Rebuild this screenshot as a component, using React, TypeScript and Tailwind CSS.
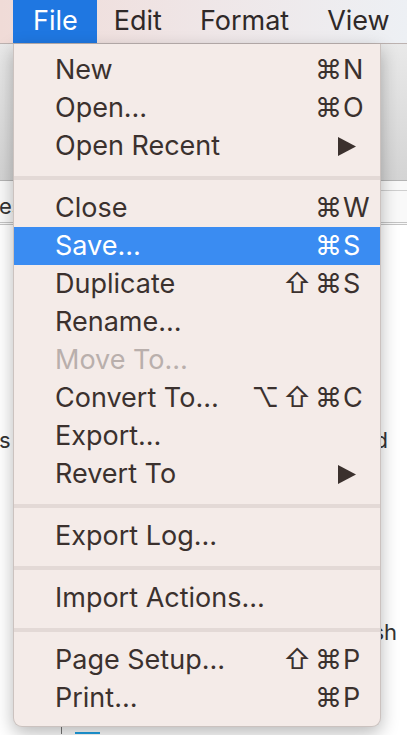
type Item =
  | { sep: true }
  | {
      sep?: false;
      label: string;
      mods?: string[];
      keyName?: string;
      submenu?: boolean;
      disabled?: boolean;
      active?: boolean;
    };

const ITEMS: Item[] = [
  { label: 'New', mods: ['⌘'], keyName: 'N' },
  { label: 'Open…', mods: ['⌘'], keyName: 'O' },
  { label: 'Open Recent', submenu: true },
  { sep: true },
  { label: 'Close', mods: ['⌘'], keyName: 'W' },
  { label: 'Save…', mods: ['⌘'], keyName: 'S', active: true },
  { label: 'Duplicate', mods: ['⇧', '⌘'], keyName: 'S' },
  { label: 'Rename…' },
  { label: 'Move To…', disabled: true },
  { label: 'Convert To…', mods: ['⌥', '⇧', '⌘'], keyName: 'C' },
  { label: 'Export…' },
  { label: 'Revert To', submenu: true },
  { sep: true },
  { label: 'Export Log…' },
  { sep: true },
  { label: 'Import Actions…' },
  { sep: true },
  { label: 'Page Setup…', mods: ['⇧', '⌘'], keyName: 'P' },
  { label: 'Print…', mods: ['⌘'], keyName: 'P' },
];

const MenuRow = ({ item }: { item: Item }) => {
  if (item.sep) {
    return (
      <div className="pt-[11px] pb-[9px]">
        <div className="h-[4px] bg-[#e3d9d6]" />
      </div>
    );
  }

  const color = item.active
    ? 'bg-[#3a8cf2] text-white'
    : item.disabled
      ? 'text-[#b9afac]'
      : 'text-[#3b312e]';

  return (
    <div className={`flex h-[38px] items-center pl-[41px] pr-[12px] ${color}`}>
      <span className="flex-1 whitespace-nowrap">{item.label}</span>
      {item.keyName && (
        <span className="flex items-center">
          {item.mods?.map((m, i) => (
            <span key={i} className="ml-[4px]">{m}</span>
          ))}
          <span className="w-[26px] pl-[1px]">{item.keyName}</span>
        </span>
      )}
      {item.submenu && (
        <svg width="18" height="19" viewBox="0 0 18 19" className="mr-[12px]">
          <polygon points="0,0 18,9.5 0,19" fill="#3b312e" />
        </svg>
      )}
    </div>
  );
};

export default function App() {
  return (
    <div
      className="relative h-[735px] w-[407px] overflow-hidden bg-white"
      style={{ fontFamily: 'Inter, "Noto Sans", "DejaVu Sans", sans-serif' }}
    >
      {/* menu bar */}
      <div className="flex h-[44px] items-stretch border-b border-[#bcb2b0] bg-gradient-to-r from-[#f0dbd7] via-[#efe6e7] to-[#edf0f4] pl-[13px] text-[27px] text-[#2f2928]">
        <div className="flex items-center bg-[#1f77e1] pl-[20px] pr-[19px] text-white">File</div>
        <div className="flex items-center pl-[17px] pr-[19px]">Edit</div>
        <div className="flex items-center px-[19px]">Format</div>
        <div className="flex items-center px-[19px]">View</div>
      </div>

      {/* window behind the menu */}
      <div className="h-[136px] bg-gradient-to-b from-[#e9e9e9] to-[#d4d4d4]" />
      <div className="border-t border-[#b4b4b4]">
        <div className="flex h-[44px] items-end justify-between border-b-[3px] border-double border-[#c4c4c4] bg-[#f9f9f9] pb-[5px] text-[22px] leading-none text-[#333]">
          <span className="-ml-[1px]">es</span>
          <span className="mb-[26px] h-px w-[26px] bg-[#cfcfcf]" />
        </div>
      </div>
      <div className="flex h-[226px] items-end justify-between text-[22px] leading-none text-[#333]">
        <span className="-ml-[1px]">s</span>
        <span className="mr-[19px]">ed</span>
      </div>
      <div className="flex h-[192px] items-end justify-end text-[22px] leading-none text-[#333]">
        <span className="mr-[10px]">sh</span>
      </div>
      <div className="mt-[81px] flex h-[10px] items-end gap-[13px] pl-[61px]">
        <span className="h-[10px] w-px bg-[#777]" />
        <span className="h-[2px] w-[25px] bg-[#1ea2e6]" />
      </div>

      {/* dropdown */}
      <div className="absolute left-[13px] top-[44px] w-[368px] rounded-b-[9px] border border-t-0 border-[#cbc2bf] bg-[#f4ebe8] pt-[7px] pb-[9px] text-[27px] shadow-[0_6px_18px_rgba(0,0,0,0.28)]">
        {ITEMS.map((item, i) => (
          <MenuRow key={i} item={item} />
        ))}
      </div>
    </div>
  );
}
